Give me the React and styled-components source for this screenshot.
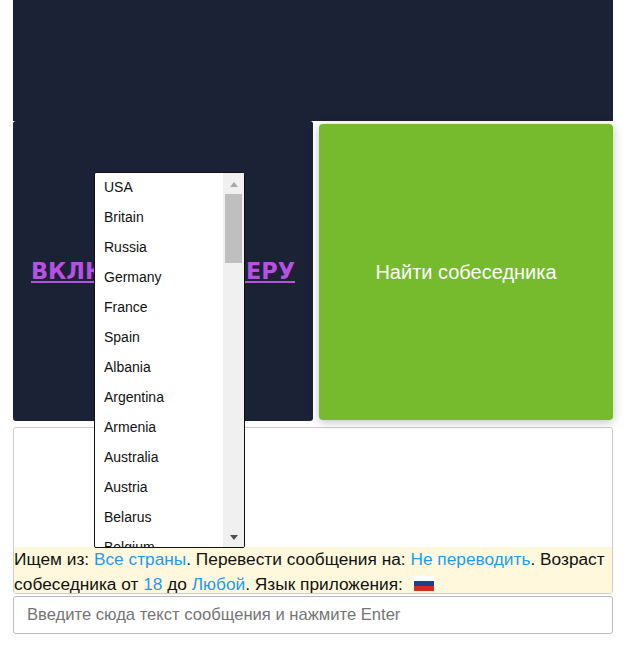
import React from "react";
import styled, { createGlobalStyle } from "styled-components";

const countries = [
  "USA", "Britain", "Russia", "Germany", "France", "Spain", "Albania",
  "Argentina", "Armenia", "Australia", "Austria", "Belarus", "Belgium",
];

const GlobalStyle = createGlobalStyle`
  html, body {
    margin: 0;
    background: #fff;
    font-family: "Liberation Sans", Arial, sans-serif;
  }
`;

const Page = styled.div`
  position: relative;
  width: 600px;
  margin-left: 13px;
`;

const TopVideo = styled.div`
  height: 121px;
  background: #1b2235;
`;

const Row = styled.div`
  display: flex;
  height: 300px;
`;

const CameraBox = styled.div`
  width: 300px;
  display: flex;
  align-items: center;
  justify-content: center;
  background: #1b2235;
  border-radius: 3px;
`;

const CameraLink = styled.a`
  font-family: "DejaVu Sans", "Liberation Sans", sans-serif;
  font-size: 22.4px;
  font-weight: 700;
  color: #b94fe3;
  text-decoration: underline;
  white-space: nowrap;
`;

const FindCell = styled.div`
  flex: 1;
  padding: 3px 0 1px 6px;
  display: flex;
`;

const FindButton = styled.button`
  flex: 1;
  border: none;
  border-radius: 4px;
  background: #75bb2d;
  color: #fff;
  font-family: inherit;
  font-size: 20px;
  box-shadow: 0 2px 10px rgba(0, 0, 0, 0.25);
`;

const ChatBox = styled.div`
  display: flex;
  flex-direction: column;
  justify-content: flex-end;
  box-sizing: border-box;
  height: 167px;
  margin-top: 6px;
  border: 1px solid #ccc;
  border-radius: 3px;
`;

const Settings = styled.div`
  height: 46px;
  background: #fff8dc;
  color: #111;
  font-size: 17.3px;
  line-height: 25px;
`;

const Option = styled.a`
  color: #1e9bf0;
`;

const Flag = styled.span`
  display: inline-block;
  width: 20px;
  height: 15px;
  margin-left: 6px;
  vertical-align: -1px;
  background: linear-gradient(#fff 0 33%, #1c3f94 33% 66%, #d52b1e 66%);
`;

const MessageInput = styled.input`
  display: block;
  box-sizing: border-box;
  width: 100%;
  height: 38px;
  margin-top: 2px;
  padding: 0 13px;
  border: 1px solid #bbb;
  border-radius: 3px;
  font-family: inherit;
  font-size: 16.6px;
  &::placeholder {
    color: #757575;
  }
`;

const Dropdown = styled.div`
  position: absolute;
  left: 81px;
  top: 172px;
  width: 151px;
  height: 376px;
  box-sizing: border-box;
  display: flex;
  background: #fff;
  border: 1px solid #111;
  border-radius: 2px;
`;

const CountryList = styled.ul`
  flex: 1;
  margin: 0;
  padding: 0;
  list-style: none;
  overflow: hidden;
`;

const Country = styled.li`
  height: 30px;
  line-height: 28px;
  padding-left: 9px;
  font-size: 14px;
  color: #111;
`;

const Scrollbar = styled.div`
  width: 21px;
  display: flex;
  flex-direction: column;
  align-items: center;
  background: #f0f0f0;
`;

const Arrow = styled.div`
  width: 0;
  height: 0;
  margin: ${(p) => (p.$up ? "9px 0 7px" : "auto 0 7px")};
  border-left: 4px solid transparent;
  border-right: 4px solid transparent;
  border-top: ${(p) => (p.$up ? "0" : "5px solid #505050")};
  border-bottom: ${(p) => (p.$up ? "5px solid #a8a8a8" : "0")};
`;

const Thumb = styled.div`
  width: 17px;
  height: 69px;
  background: #bfbfbf;
`;

export default function App() {
  return (
    <Page>
      <GlobalStyle />
      <TopVideo />
      <Row>
        <CameraBox>
          <CameraLink href="#">ВКЛЮЧИТЬ КАМЕРУ</CameraLink>
        </CameraBox>
        <FindCell>
          <FindButton>Найти собеседника</FindButton>
        </FindCell>
      </Row>
      <ChatBox>
        <Settings>
          Ищем из: <Option>Все страны</Option>. Перевести сообщения на:{" "}
          <Option>Не переводить</Option>. Возраст собеседника от <Option>18</Option> до{" "}
          <Option>Любой</Option>. Язык приложения: <Flag />
        </Settings>
      </ChatBox>
      <MessageInput placeholder="Введите сюда текст сообщения и нажмите Enter" />
      <Dropdown>
        <CountryList>
          {countries.map((c) => (
            <Country key={c}>{c}</Country>
          ))}
        </CountryList>
        <Scrollbar>
          <Arrow $up />
          <Thumb />
          <Arrow />
        </Scrollbar>
      </Dropdown>
    </Page>
  );
}
